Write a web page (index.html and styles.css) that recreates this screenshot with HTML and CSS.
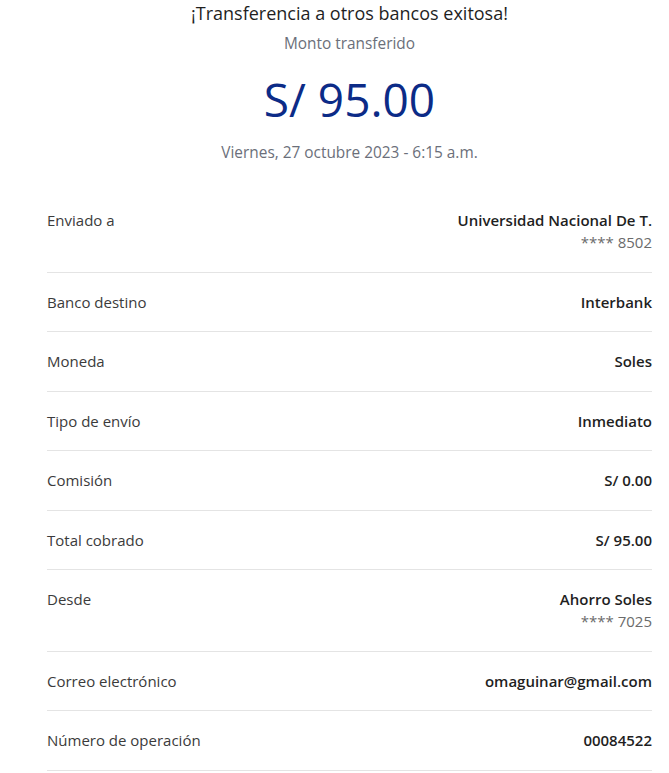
FILE: index.html
```html
<!DOCTYPE html>
<html lang="es">
<head>
    <meta charset="UTF-8">
    <meta name="viewport" content="width=device-width, initial-scale=1.0">
    <title>Constancia de transferencia</title>
    <link rel="stylesheet" href="styles.css">
</head>
<body>
    <main class="receipt">
        <header class="summary">
            <h1 class="title">¡Transferencia a otros bancos exitosa!</h1>
            <p class="caption">Monto transferido</p>
            <p class="amount">S/ 95.00</p>
            <p class="date">Viernes, 27 octubre 2023 - 6:15 a.m.</p>
        </header>

        <ul class="details">
            <li class="row">
                <span class="label">Enviado a</span>
                <span class="value">Universidad Nacional De T.<small>**** 8502</small></span>
            </li>
            <li class="row">
                <span class="label">Banco destino</span>
                <span class="value">Interbank</span>
            </li>
            <li class="row">
                <span class="label">Moneda</span>
                <span class="value">Soles</span>
            </li>
            <li class="row">
                <span class="label">Tipo de envío</span>
                <span class="value">Inmediato</span>
            </li>
            <li class="row">
                <span class="label">Comisión</span>
                <span class="value">S/ 0.00</span>
            </li>
            <li class="row">
                <span class="label">Total cobrado</span>
                <span class="value">S/ 95.00</span>
            </li>
            <li class="row">
                <span class="label">Desde</span>
                <span class="value">Ahorro Soles<small>**** 7025</small></span>
            </li>
            <li class="row">
                <span class="label">Correo electrónico</span>
                <span class="value">omaguinar@gmail.com</span>
            </li>
            <li class="row">
                <span class="label">Número de operación</span>
                <span class="value">00084522</span>
            </li>
        </ul>
    </main>
</body>
</html>
```

FILE: styles.css
```css
body {
    font-family: 'Open Sans', 'Noto Sans', sans-serif;
    background-color: #ffffff;
    margin: 0;
    padding: 0;
    color: #222222;
}
.receipt {
    padding: 0 17px 0 47px;
}
.summary {
    text-align: center;
    padding-top: 1px;
    padding-bottom: 28px;
}
.title {
    font-size: 18px;
    font-weight: 500;
    line-height: 24px;
    margin: 0;
    color: #1f1f1f;
}
.caption {
    font-size: 15.4px;
    line-height: 20px;
    margin: 9px 0 0;
    color: #6b6f7a;
}
.amount {
    font-size: 46px;
    line-height: 52px;
    margin: 19px 0 0;
    color: #0c2b87;
}
.date {
    font-size: 15.4px;
    line-height: 20px;
    margin: 18px 0 0;
    color: #6b6f7a;
}
.details {
    list-style: none;
    margin: 0;
    padding: 0;
}
.row {
    display: flex;
    justify-content: space-between;
    align-items: flex-start;
    padding: 18px 0 18.5px;
    font-size: 15px;
    line-height: 22px;
    border-bottom: 1px solid #e4e4e4;
}
.label {
    color: #3b3b3b;
}
.value {
    text-align: right;
    font-weight: 600;
    color: #1f1f1f;
}
.value small {
    display: block;
    font-size: 15px;
    font-weight: 400;
    color: #6b6b6b;
}
```
